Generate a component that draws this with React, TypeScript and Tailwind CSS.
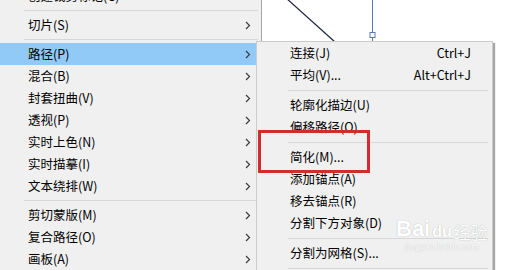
const font = "font-['Microsoft_YaHei','Noto_Sans_CJK_SC',sans-serif]";

type Item = { label: string; sep?: false; active?: boolean; shortcut?: string } | { sep: true };

const mainItems: Item[] = [
  { label: "创建裁剪标记(C)" },
  { sep: true },
  { label: "切片(S)" },
  { sep: true },
  { label: "路径(P)", active: true },
  { label: "混合(B)" },
  { label: "封套扭曲(V)" },
  { label: "透视(P)" },
  { label: "实时上色(N)" },
  { label: "实时描摹(I)" },
  { label: "文本绕排(W)" },
  { sep: true },
  { label: "剪切蒙版(M)" },
  { label: "复合路径(O)" },
  { label: "画板(A)" },
];

const subItems: Item[] = [
  { label: "连接(J)", shortcut: "Ctrl+J" },
  { label: "平均(V)...", shortcut: "Alt+Ctrl+J" },
  { sep: true },
  { label: "轮廓化描边(U)" },
  { label: "偏移路径(O)..." },
  { sep: true },
  { label: "简化(M)..." },
  { label: "添加锚点(A)" },
  { label: "移去锚点(R)" },
  { label: "分割下方对象(D)" },
  { sep: true },
  { label: "分割为网格(S)..." },
  { sep: true },
];

function Chevron() {
  return (
    <svg width="6" height="9" viewBox="0 0 6 9" className="shrink-0">
      <polyline points="1,1 4.5,4.5 1,8" fill="none" stroke="#3c3c3c" strokeWidth="1.2" />
    </svg>
  );
}

function MainMenu() {
  return (
    <div className="w-[262px] h-full bg-[#f0f0f0] border-r border-[#a8a8a8] overflow-hidden">
      <div className="-mt-[15px] flex flex-col">
        {mainItems.map((it, i) =>
          it.sep ? (
            <div key={i} className="h-[7px] flex items-center pl-[24px] pr-[3px]">
              <div className="h-px w-full bg-[#d7d7d7]" />
            </div>
          ) : (
            <div
              key={i}
              className={`h-[22px] flex items-center justify-between pl-[28px] pr-[10px] ${it.active ? "bg-[#91c9f7]" : ""}`}
            >
              <span className="text-[12.5px] text-black">{it.label}</span>
              {i > 0 && <Chevron />}
            </div>
          )
        )}
      </div>
    </div>
  );
}

function SubMenu() {
  return (
    <div className="absolute left-[256px] top-[41px] w-[237px] h-[240px] bg-[#f0f0f0] border border-[#cccccc] shadow-[2px_2px_1px_rgba(0,0,0,0.35)] flex flex-col">
      {subItems.map((it, i) =>
        it.sep ? (
          <div key={i} className="h-[8px] flex items-center pl-[31px] pr-[4px]">
            <div className="h-px w-full bg-[#d7d7d7]" />
          </div>
        ) : (
          <div key={i} className="h-[22px] flex items-center justify-between pl-[33px] pr-[21px]">
            <span className="text-[12.5px] text-black">{it.label}</span>
            {it.shortcut && <span className="text-[12.5px] text-black">{it.shortcut}</span>}
          </div>
        )
      )}
    </div>
  );
}

function CanvasArt() {
  return (
    <svg className="absolute left-[262px] top-0" width="255" height="45" viewBox="0 0 255 45">
      <line x1="24" y1="-2" x2="73" y2="42" stroke="#1c2440" strokeWidth="1.2" />
      <line x1="110.5" y1="0" x2="110.5" y2="45" stroke="#5a7bb0" strokeWidth="1" />
      <rect x="108" y="32.5" width="5" height="5" fill="#ffffff" stroke="#5a7bb0" strokeWidth="1" />
    </svg>
  );
}

function Watermark() {
  return (
    <div className="absolute left-[396px] top-[218px] flex flex-col items-center pointer-events-none">
      <div className="flex items-end gap-[2px] text-white [text-shadow:0_0_1px_rgba(120,120,120,0.6)]">
        <span className="font-['Liberation_Sans',sans-serif] text-[22px] font-bold leading-none">Bai</span>
        <span className="font-['Liberation_Sans',sans-serif] text-[16px] font-bold leading-none">du</span>
        <span className="text-[17px] leading-none">经验</span>
      </div>
      <span className="font-['Liberation_Serif',serif] text-[10px] text-white [text-shadow:0_0_1px_rgba(120,120,120,0.5)] leading-[14px]">
        jingyan.baidu.com
      </span>
    </div>
  );
}

export default function App() {
  return (
    <div className={`relative w-[517px] h-[270px] overflow-hidden bg-white flex ${font}`}>
      <MainMenu />
      <CanvasArt />
      <SubMenu />
      <div className="absolute left-[258px] top-[130px] w-[112px] h-[43px] border-[3px] border-[#d42b30]" />
      <Watermark />
    </div>
  );
}
